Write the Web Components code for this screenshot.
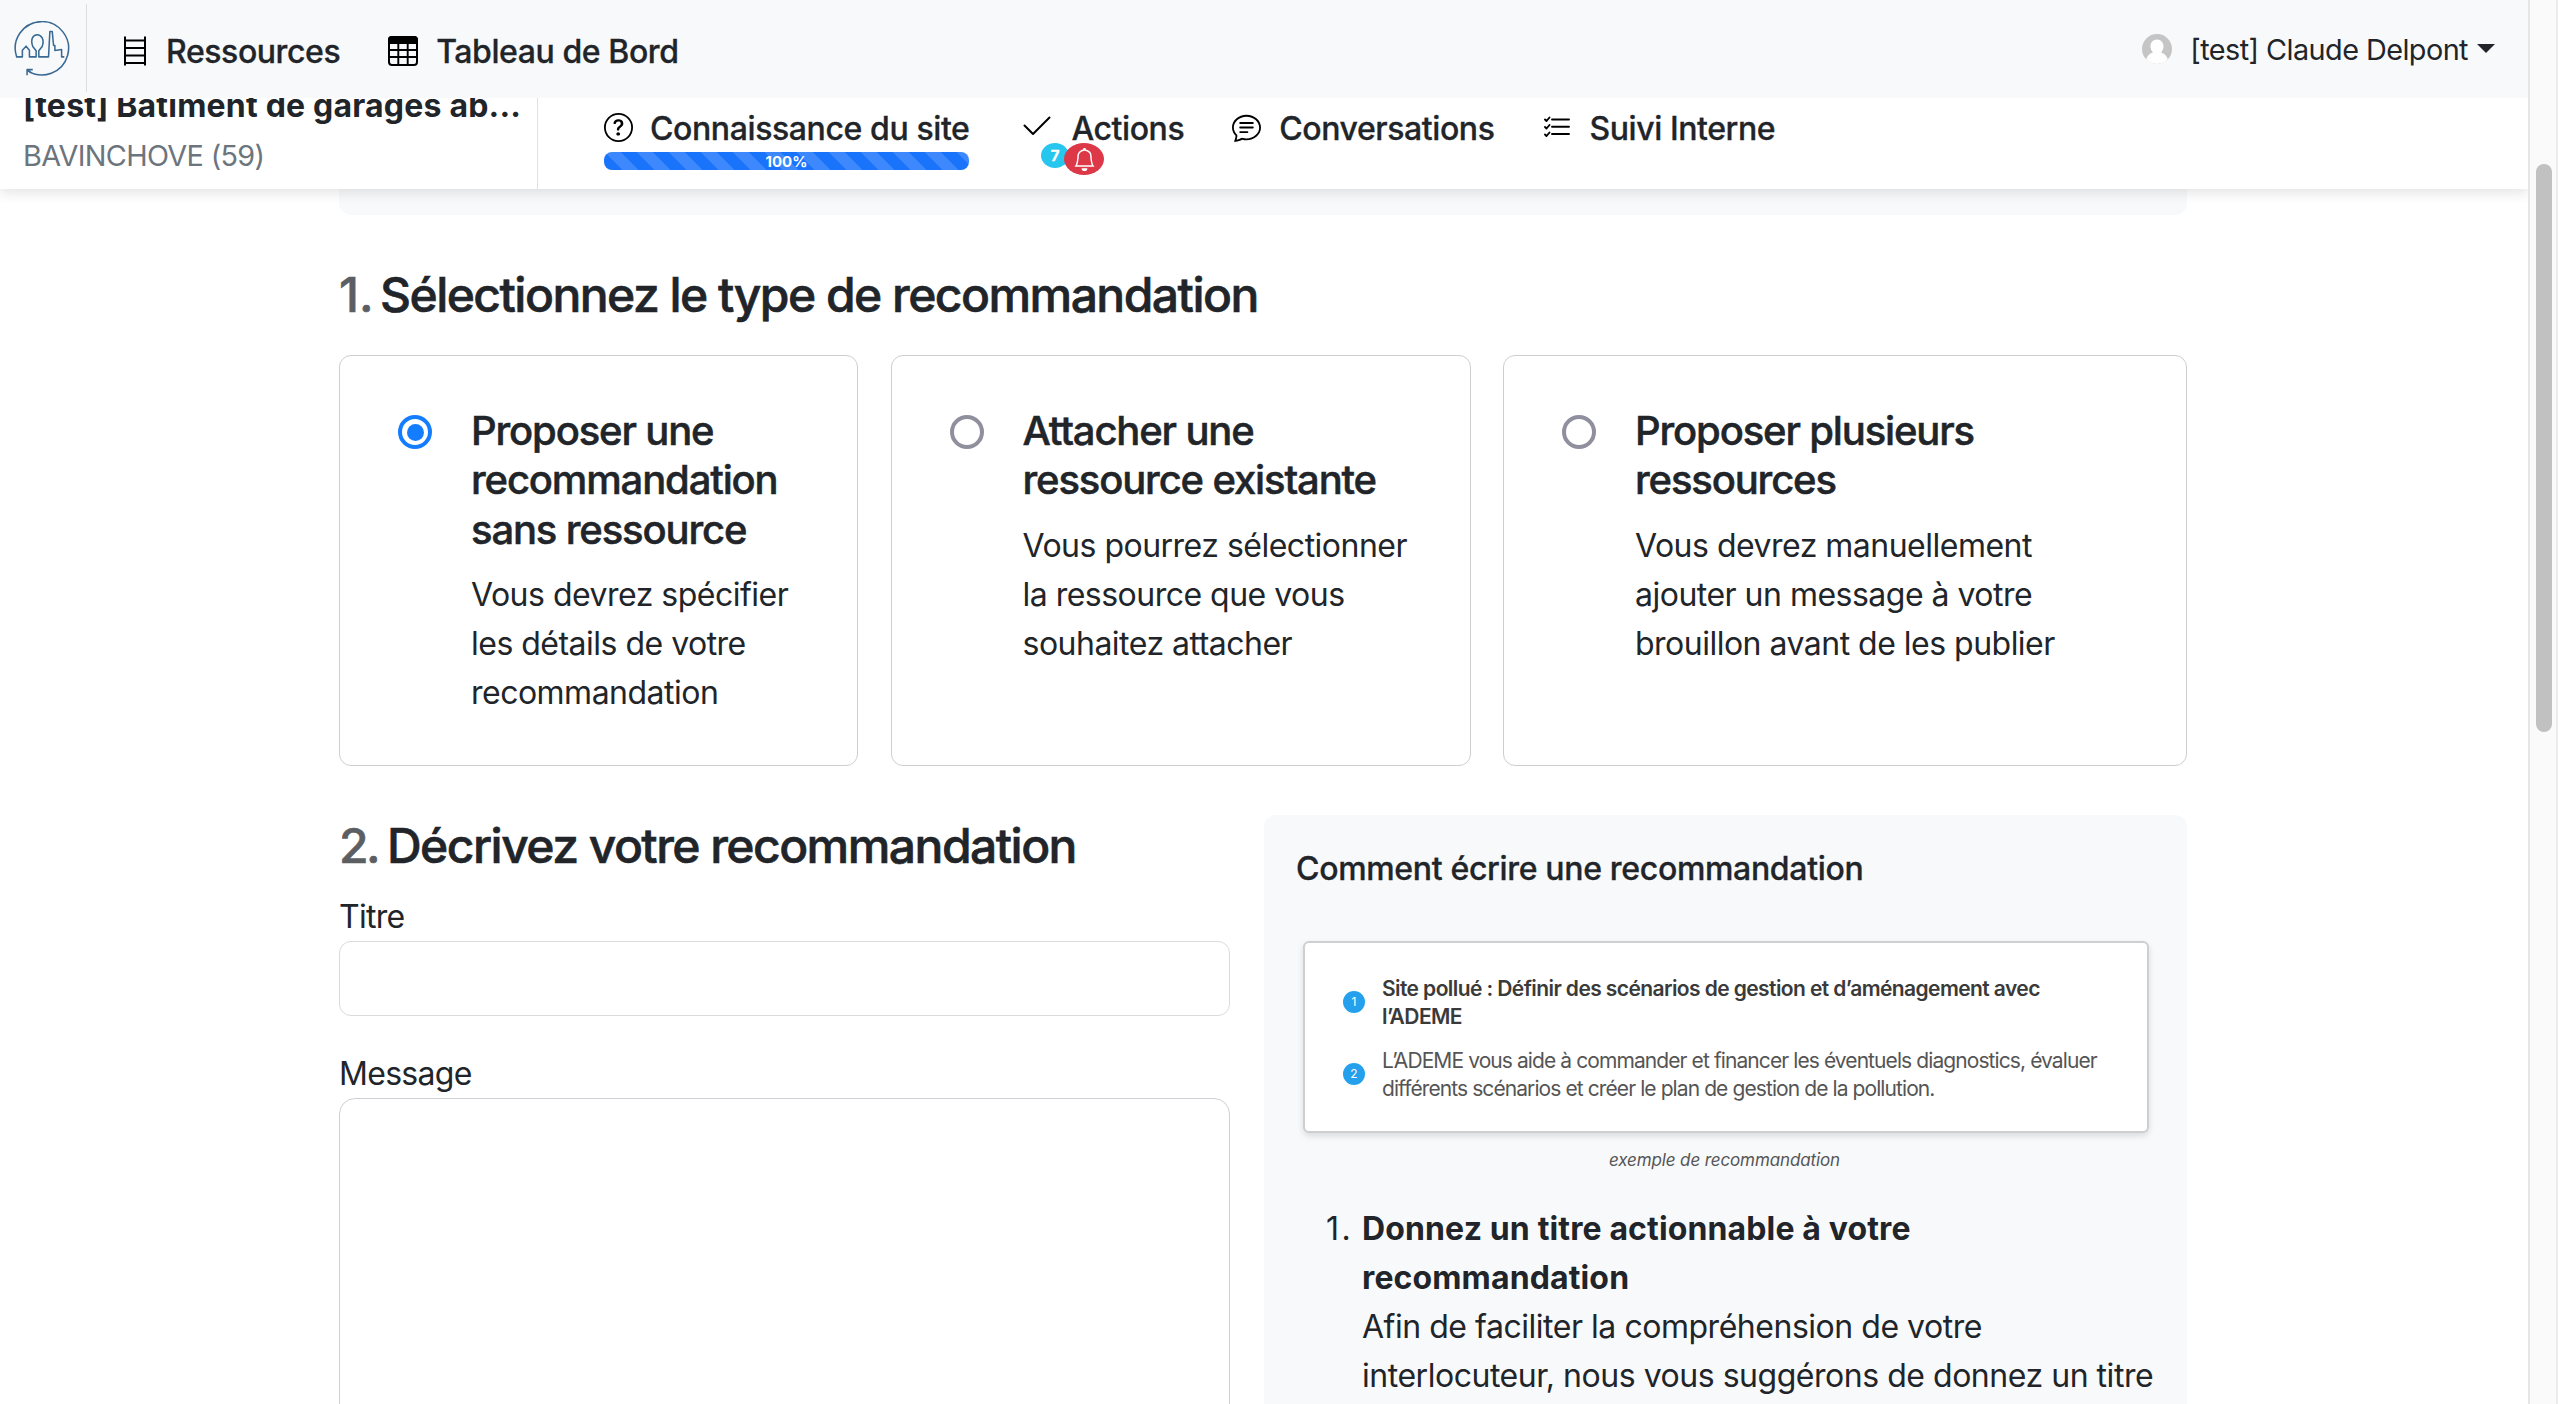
<!DOCTYPE html>
<html lang="fr"><head><meta charset="utf-8"><title>Recommandation</title>
<style>
html,body{margin:0;height:100%;overflow:hidden;background:#fff}
body{font:400 32px/49px Inter,"Liberation Sans",sans-serif;letter-spacing:-.47px;color:#212529}
</style></head><body><app-shell></app-shell>
<script>
const def=(name,html)=>customElements.define(name,class extends HTMLElement{
  connectedCallback(){if(this.shadowRoot)return;const r=this.attachShadow({mode:'open'});const t=document.createElement('template');t.innerHTML=typeof html==='function'?html(this):html;r.append(t.content.cloneNode(true));}
});
const ICONS={
logo:['40 30 170 167',57,56,'<g fill="none" stroke="#3a6a94" stroke-width="4.6" stroke-linejoin="round"><path d="M48 137A79.5 79.5 0 1 1 80 178"/><path d="M46 137H65V117L76 105L86 117V137H106V119L96 106C88 84 97 71 109 71S132 84 124 106L114 119V137H143L147 61H154L158 103H162V118L182 115V137H190"/><path d="M79 192V175H96M80 176L92 185"/></g>'],
ladder:['0 0 24 30',24,30,'<path d="M2 .5V29.500M22 .5V29.500M2 4.500H22M2 12H22M2 19.500H22M2 27H22" fill="none" stroke="#000" stroke-width="2"/>'],
table:['0 0 30 30',30,30,'<rect x="1" y="1" width="28" height="28" rx="3" fill="none" stroke="#000" stroke-width="2"/><path d="M1 3Q1 1 4 1H26Q29 1 29 4V7H1ZM1 14H29M1 21H29M10.300 7V29M19.700 7V29" stroke="#000" stroke-width="1.900"/>'],
question:['0 0 16 16',29,29,'<path d="M8 15A7 7 0 1 1 8 1a7 7 0 0 1 0 14zm0 1A8 8 0 1 0 8 0a8 8 0 0 0 0 16z"/><path d="M5.255 5.786a.237.237 0 0 0 .241.247h.825c.138 0 .248-.113.266-.25.09-.656.54-1.134 1.342-1.134.686 0 1.314.343 1.314 1.168 0 .635-.374.927-.965 1.371-.673.489-1.206 1.06-1.168 1.987l.003.217a.25.25 0 0 0 .25.246h.811a.25.25 0 0 0 .25-.25v-.105c0-.718.273-.927 1.01-1.486.609-.463 1.244-.977 1.244-2.056 0-1.511-1.276-2.241-2.673-2.241-1.267 0-2.655.59-2.75 2.286zm1.557 5.763c0 .533.425.927 1.01.927.609 0 1.028-.394 1.028-.927 0-.552-.42-.94-1.029-.94-.584 0-1.009.388-1.009.94z"/>'],
check:['0 0 28 29',28,29,'<path d="M1.500 12.500L10 21L26.500 4.500" fill="none" stroke="#000" stroke-width="2" stroke-linecap="round" stroke-linejoin="round"/>'],
chat:['0 0 16 16',29,29,'<path d="M2.678 11.894a1 1 0 0 1 .287.801 10.97 10.97 0 0 1-.398 2c1.395-.323 2.247-.697 2.634-.893a1 1 0 0 1 .71-.074A8.06 8.06 0 0 0 8 14c3.996 0 7-2.807 7-6 0-3.192-3.004-6-7-6S1 4.808 1 8c0 1.468.617 2.83 1.678 3.894zm-.493 3.905a21.682 21.682 0 0 1-.713.129c-.2.032-.352-.176-.273-.362a9.68 9.68 0 0 0 .244-.637l.003-.01c.248-.72.45-1.548.524-2.319C.743 11.37 0 9.76 0 8c0-3.866 3.582-7 8-7s8 3.134 8 7-3.582 7-8 7a9.06 9.06 0 0 1-2.347-.306c-.52.263-1.639.742-3.468 1.105z"/><path d="M4.500 5.500H11.500M4.500 8H11.500M4.500 10.500H8.500" stroke="#000" stroke-linecap="round"/>'],
list:['0 0 28 29',28,29,'<path d="M9 6.500H26M9 13.700H26M9 21H26M2 6.500L3.500 8L6.500 4.500M2 14L3.500 15.500L6.500 12M2 21.500L3.500 23L6.500 19.500" fill="none" stroke="#000" stroke-width="1.900" stroke-linecap="round" stroke-linejoin="round"/>'],
bell:['0 0 16 16',23,23,'<path fill="#fff" d="M8 16a2 2 0 0 0 2-2H6a2 2 0 0 0 2 2zM8 1.918l-.797.161A4.002 4.002 0 0 0 4 6c0 .628-.134 2.197-.459 3.742-.16.767-.376 1.566-.663 2.258h10.244c-.287-.692-.502-1.49-.663-2.258C12.134 8.197 12 6.628 12 6a4.002 4.002 0 0 0-3.203-3.92L8 1.917zM14.22 12c.223.447.481.801.78 1H1c.299-.199.557-.553.78-1C2.68 10.2 3 6.88 3 6c0-2.42 1.72-4.44 4.005-4.901a1 1 0 1 1 1.99 0A5.002 5.002 0 0 1 13 6c0 .88.32 4.2 1.22 6z"/>'],
avatar:['0 0 30 30',30,30,'<defs><clipPath id="c"><circle cx="15" cy="15" r="15"/></clipPath></defs><g clip-path="url(#c)"><rect width="30" height="30" fill="#c5c5c5"/><path d="M15 5.500c4 0 6.500 3 6.500 6.500 0 3-1 5-2.500 6.500 4 1 7 4.500 8 11.500H3c1-7 4-10.500 8-11.500C9.500 17 8.500 15 8.500 12c0-3.500 2.500-6.500 6.500-6.500z" fill="#fff"/></g>']
};
def('ui-icon',e=>{const [v,w,h,b]=ICONS[e.getAttribute('name')];return `<style>:host{display:block;flex:none}svg{display:block}</style><svg viewBox="${v}" width="${w}" height="${h}">${b}</svg>`});
def('nav-link',e=>`<style>:host{display:flex;align-items:flex-start;gap:var(--gap,19px);font-weight:500;font-size:32px;line-height:48px;letter-spacing:-.42px;white-space:nowrap}span{-webkit-text-stroke:.3px currentColor}ui-icon{margin-top:8px}</style><ui-icon name="${e.getAttribute('icon')}"></ui-icon><span><slot></slot></span>`);
def('top-bar',`<style>
:host{display:flex;height:98px;background:#f8f9fb;flex:none;box-sizing:border-box}
.logo{width:87px;height:88px;margin-top:4px;border-right:1px solid #dcdfe2;display:flex;box-sizing:border-box}
.logo ui-icon{margin:17px 0 0 14px}
.a{margin:28px 0 0 36px;--gap:19px}.b{margin:28px 0 0 48px;--gap:18px}
.user{margin:0 33px 0 auto;display:flex;align-items:flex-start;font-size:28.8px;letter-spacing:-.55px;white-space:nowrap}
.user ui-icon{margin:34px 18px 0 0}.user span{margin-top:24.500px}
i{margin:44px 0 0 9px;border:9px solid transparent;border-top-color:#212529;border-bottom:0}
</style><div class="logo"><ui-icon name="logo"></ui-icon></div><nav-link class="a" icon="ladder">Ressources</nav-link><nav-link class="b" icon="table">Tableau de Bord</nav-link><div class="user"><ui-icon name="avatar"></ui-icon><span>[test] Claude Delpont</span><i></i></div>`);
def('progress-bar',`<style>:host{display:flex;align-items:center;justify-content:center;height:18px;border-radius:8px;color:#fff;font:700 15px/18px Inter,sans-serif;letter-spacing:0;background:linear-gradient(45deg,rgba(255,255,255,.15) 25%,transparent 25%,transparent 50%,rgba(255,255,255,.15) 50%,rgba(255,255,255,.15) 75%,transparent 75%,transparent) 0 0/32px 32px #1a73fb}span{padding-top:1px}</style><span><slot></slot></span>`);
def('sub-bar',`<style>
:host{display:flex;height:91px;background:#fff;flex:none;box-shadow:0 4px 12px rgba(0,0,0,.11);position:relative;clip-path:inset(0 0 -24px 0)}
.p{width:538px;box-sizing:border-box;padding-left:23px;border-right:1px solid #dee2e6;white-space:nowrap}
.t{font-weight:700;line-height:48px;letter-spacing:.2px;margin-top:-16px}
.c{font-size:28.800px;line-height:44px;letter-spacing:-.65px;color:#6c757d;margin-top:4px}
.k{margin:7px 0 0 66px;width:365px}.k progress-bar{margin-top:-1px}.k nav-link{--gap:17px;letter-spacing:-.4px}
.x{margin:7px 0 0 54px;position:relative;--gap:20.500px}.y{margin:7px 0 0 48px;--gap:18px}.z{margin:7px 0 0 49px;--gap:18px}
.n,.r{position:absolute;display:flex;align-items:center;justify-content:center;border-radius:50%}
.n{left:18px;top:38px;width:28px;height:25px;background:#26c6ee;color:#fff;font:700 15px/25px Inter,sans-serif;letter-spacing:0}
.r{left:41px;top:38px;width:40px;height:32px;background:#dc3848}
</style><div class="p"><div class="t">[test] Batiment de garages ab...</div><div class="c">BAVINCHOVE (59)</div></div>
<div class="k"><nav-link icon="question">Connaissance du site</nav-link><progress-bar>100%</progress-bar></div>
<nav-link class="x" icon="check">Actions<b class="n">7</b><b class="r"><ui-icon name="bell"></ui-icon></b></nav-link>
<nav-link class="y" icon="chat">Conversations</nav-link><nav-link class="z" icon="list">Suivi Interne</nav-link>`);
def('step-title',e=>`<style>:host{display:flex;font-weight:500;font-size:48px;line-height:58px;letter-spacing:-1.53px;white-space:nowrap;-webkit-text-stroke:.6px currentColor}b{font-weight:500;color:#5b5e62;-webkit-text-stroke-color:#5b5e62;width:${e.getAttribute('w')}px;letter-spacing:${e.getAttribute('ls')}px}</style><b>${e.getAttribute('n')}.</b><span><slot></slot></span>`);
def('choice-card',e=>`<style>
:host{display:flex;box-sizing:border-box;height:411px;border:1px solid #ccced0;border-radius:12px;padding:50px 0 0 58px;white-space:nowrap}
i{flex:none;box-sizing:border-box;width:34px;height:34px;border-radius:50%;border:4.5px solid #8f8f9d;margin:9px 39px 0 0;display:flex;align-items:center;justify-content:center}
:host([checked]) i{border-color:#147dff}:host([checked]) i::after{content:"";width:17px;height:17px;border-radius:50%;background:#147dff}
h4{margin:0 0 16px;font-weight:500;font-size:40px;line-height:49.400px;letter-spacing:-1.150px;-webkit-text-stroke:.5px currentColor}
p{margin:0;letter-spacing:-.510px}</style><i></i><div><h4><slot name="title"></slot></h4><p><slot></slot></p></div>`);
def('form-field',e=>`<style>:host{display:block}label{display:block;white-space:nowrap;letter-spacing:-.7px}div{box-sizing:border-box;height:${e.getAttribute('h')}px;border:1px solid ${e.getAttribute('c')};border-radius:${e.getAttribute('r')}px}</style><label><slot></slot></label><div></div>`);
def('example-card',`<style>
:host{display:grid;grid-template-columns:22px auto;column-gap:17px;align-content:start;box-sizing:border-box;width:846px;height:192px;border:2px solid #cdcfd1;border-radius:6px;background:#fff;box-shadow:0 3px 6px rgba(0,0,0,.12);padding:32px 0 0 38px;font-size:21px;line-height:28px;white-space:nowrap;row-gap:16px}
b{width:22px;height:22px;border-radius:50%;background:#24a0ed;color:#fff;font:400 12px/22px Inter,sans-serif;letter-spacing:0;text-align:center;margin-top:16px}
.t{font-weight:600;color:#3a3a3a;letter-spacing:-.590px}.d{color:#555;letter-spacing:-.910px}
</style><b>1</b><div class="t">Site pollué : Définir des scénarios de gestion et d’aménagement avec<br>l’ADEME</div><b>2</b><div class="d">L’ADEME vous aide à commander et financer les éventuels diagnostics, évaluer<br>différents scénarios et créer le plan de gestion de la pollution.</div>`);
def('help-panel',`<style>
:host{display:block;box-sizing:border-box;width:923px;height:640px;border-radius:12px;background:#f8f9fb;padding:29px 0 0 32px;white-space:nowrap}
h5{margin:0;font-weight:500;font-size:32px;line-height:49px;letter-spacing:-.330px;-webkit-text-stroke:.3px currentColor}
example-card{margin:48px 0 0 7px}
.cap{margin:15px 34px 0 0;text-align:center;font-style:italic;font-size:17px;line-height:24px;letter-spacing:-.120px;color:#555}
.li{display:flex;margin-top:32px}.n{width:36px;padding-left:30px;letter-spacing:2.500px}.li b{letter-spacing:.130px}
</style><h5>Comment écrire une recommandation</h5><example-card></example-card><div class="cap">exemple de recommandation</div>
<div class="li"><div class="n">1.</div><div><b>Donnez un titre actionnable à votre<br>recommandation</b><br>Afin de faciliter la compréhension de votre<br>interlocuteur, nous vous suggérons de donnez un titre</div></div>`);
def('page-main',`<style>
:host{display:block;padding:0 0 0 339px;flex:1;overflow:hidden}
.prev{width:1848px;height:26px;border-radius:0 0 12px 12px;background:#f8f9fb}
.s1{margin-top:51px}
.cards{display:grid;grid-template-columns:519px 580px 684px;column-gap:32.500px;margin-top:31px;width:1848px}
.low{display:flex;justify-content:space-between;width:1848px;margin-top:49px}.l{width:891px}
.s2{margin-top:2px}.f1{margin-top:17px}.f2{margin-top:33px}
</style><div class="prev"></div><step-title class="s1" n="1" w="41" ls="0">Sélectionnez le type de recommandation</step-title>
<div class="cards">
<choice-card checked><span slot="title">Proposer une<br>recommandation<br>sans ressource</span>Vous devrez spécifier<br>les détails de votre<br>recommandation</choice-card>
<choice-card><span slot="title">Attacher une<br>ressource existante</span>Vous pourrez sélectionner<br>la ressource que vous<br>souhaitez attacher</choice-card>
<choice-card><span slot="title">Proposer plusieurs<br>ressources</span>Vous devrez manuellement<br>ajouter un message à votre<br>brouillon avant de les publier</choice-card></div>
<div class="low"><div class="l"><step-title class="s2" n="2" w="48" ls="-2.5">Décrivez votre recommandation</step-title>
<form-field class="f1" h="75" c="#d9dbdd" r="12">Titre</form-field><form-field class="f2" h="400" c="#cdd0d4" r="16">Message</form-field></div>
<help-panel></help-panel></div>`);
def('scroll-track',`<style>:host{display:block;box-sizing:border-box;width:30px;border-left:2px solid #e6e6e6;border-right:2px solid #ececec;background:#fafafa;padding:164px 0 0 6px}div{width:16px;height:568px;border-radius:8px;background:#c1c1c1}</style><div></div>`);
def('app-shell',`<style>:host{display:flex;width:2558px;height:1404px;overflow:hidden}.m{width:2528px;display:flex;flex-direction:column;overflow:hidden}</style><div class="m"><top-bar></top-bar><sub-bar></sub-bar><page-main></page-main></div><scroll-track></scroll-track>`);
</script></body></html>
